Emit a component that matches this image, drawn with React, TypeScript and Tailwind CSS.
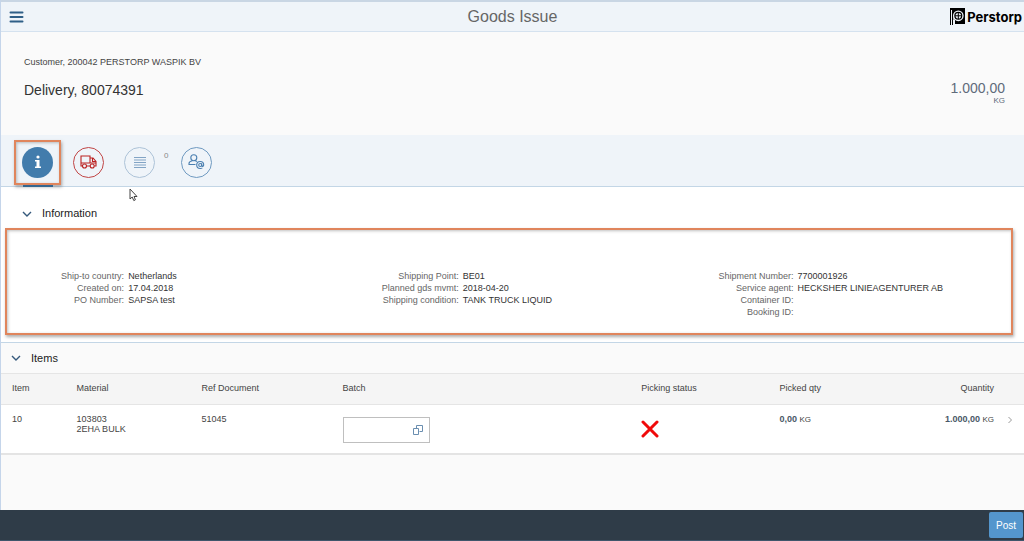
import React from "react";

type Field = { label: string; value: string };

const fieldGroups: Field[][] = [
  [
    { label: "Ship-to country:", value: "Netherlands" },
    { label: "Created on:", value: "17.04.2018" },
    { label: "PO Number:", value: "SAPSA test" },
  ],
  [
    { label: "Shipping Point:", value: "BE01" },
    { label: "Planned gds mvmt:", value: "2018-04-20" },
    { label: "Shipping condition:", value: "TANK TRUCK LIQUID" },
  ],
  [
    { label: "Shipment Number:", value: "7700001926" },
    { label: "Service agent:", value: "HECKSHER LINIEAGENTURER AB" },
    { label: "Container ID:", value: "" },
    { label: "Booking ID:", value: "" },
  ],
];

const ChevronDown = () => (
  <svg width="10" height="6" viewBox="0 0 10 6" fill="none" stroke="#35597c" strokeWidth="1.4">
    <path d="M1 1l4 4 4-4" />
  </svg>
);

const Logo = () => (
  <a href="#" aria-label="Perstorp home" className="flex items-center gap-0.5 text-black">
    <svg width="15" height="17" viewBox="0 0 15 17">
      <path d="M0 0h15v16H5V12H3V17H0z" fill="#000" />
      <path d="M1.500 2v15" stroke="#eff4f9" strokeWidth="1" />
      <path d="M4 17V7.500" stroke="#eff4f9" strokeWidth="1.400" />
      <circle cx="8.300" cy="7.800" r="4.700" fill="#000" stroke="#eff4f9" strokeWidth="1.300" />
      <circle cx="8.300" cy="7.800" r="2.800" fill="#eff4f9" />
      <path d="M8.300 4.500v6.600M5 7.800h6.600" stroke="#000" strokeWidth="1" />
    </svg>
    <span className="font-['Inter',sans-serif] text-[13px] leading-4 font-bold">Perstorp</span>
  </a>
);

const Header = () => (
  <header className="grid h-8 grid-cols-[1fr_auto_1fr] items-center border-t-2 border-b border-t-[#c9d6e4] border-b-[#d5e2ef] bg-[#eff4f9]">
    <button aria-label="Menu" className="ml-2 w-4">
      <svg width="15" height="12" viewBox="0 0 15 12" stroke="#2f5f87" strokeWidth="2" strokeLinecap="round">
        <path d="M1.500 1.500h12M1.500 6h12M1.500 10.500h12" />
      </svg>
    </button>
    <h1 className="text-base text-[#666]">Goods Issue</h1>
    <div className="flex justify-end pr-0.5">
      <Logo />
    </div>
  </header>
);

const Summary = () => (
  <section className="flex h-[103px] justify-between bg-[#fafafa] pr-[19px] pl-[23px]">
    <div>
      <p className="mt-6 text-[9px] leading-3 text-[#444]">Customer, 200042 PERSTORP WASPIK BV</p>
      <h2 className="mt-3 text-sm text-[#333]">Delivery, 80074391</h2>
    </div>
    <div className="mt-[46px] text-right text-[#5f6b7a]">
      <p className="text-sm">1.000,00</p>
      <p className="text-[8px] leading-[6px]">KG</p>
    </div>
  </section>
);

const Tabs = () => (
  <nav className="relative flex h-[52px] items-center border-b border-[#c3d6e6] bg-[#eff4f9] pt-[3px] pl-[13px]">
    <div className="mr-3 flex h-[45px] w-[47px] items-center justify-center border-2 border-[#e0855c] shadow-[1px_2px_3px_#6668,inset_1px_1px_3px_#8888]">
      <button aria-label="Information" className="flex size-[31px] items-center justify-center rounded-full bg-[#427cac]">
        <svg width="8" height="14" viewBox="0 0 8 14" fill="#fff">
          <circle cx="4" cy="2" r="1.600" />
          <path d="M1 5h4.500v6.500H7V13H1v-1.500h1.500v-5H1z" />
        </svg>
      </button>
    </div>
    <button aria-label="Shipment" className="mr-5 flex size-[31px] items-center justify-center rounded-full border border-[#c14646]">
      <svg width="17" height="14" viewBox="0 0 17 14" fill="none" stroke="#bb2020" strokeWidth="1.100">
        <path d="M2.500 11H1V1H10V8M6.500 11H10M10 3H13L16 6.500V11H14.500M1 8H16M12.500 3V6.500H16" />
        <circle cx="4.500" cy="11" r="2" />
        <circle cx="12.200" cy="11" r="2" />
      </svg>
    </button>
    <button aria-label="Notes" className="flex size-[31px] items-center justify-center rounded-full border border-[#adc3d8]">
      <svg width="12" height="13" viewBox="0 0 12 13" stroke="#82a4c5" strokeWidth="1">
        <path d="M0 1.500h12M0 4h12M0 6.500h12M0 9h12M0 11.500h12" />
      </svg>
    </button>
    <span className="mr-[13px] mb-3 ml-[9px] text-[8px] leading-3 text-[#888]">0</span>
    <button aria-label="Contact" className="flex size-[31px] items-center justify-center rounded-full border border-[#6f9ac1]">
      <svg width="17" height="16" viewBox="0 0 17 16" fill="none" stroke="#4a7fb0" strokeWidth="1.100">
        <circle cx="5.800" cy="3.800" r="3" />
        <path d="M7.500 10.500H1V9.500C1 8 2.500 7 4.500 6.700M7 6.700C8 6.900 8.700 7.200 9 7.600" />
        <circle cx="12.200" cy="11" r="1.500" />
        <path d="M13.700 9.300v2.500c0 1 2 .8 2-.9 0-2-1.400-3.400-3.500-3.400S8.700 9 8.700 11s1.500 3.500 3.500 3.500c.9 0 1.600-.2 2.200-.6" />
      </svg>
    </button>
    <span className="absolute bottom-[-1px] left-[22px] h-0.5 w-[30px] bg-[#35668f]" />
    {/* Mouse pointer */}
    <svg className="absolute top-[53px] left-32" width="9" height="14" viewBox="0 0 9 14" fill="#fff" stroke="#444" strokeWidth="1">
      <path d="M1 1v10l2.200-2 1.600 3.600 1.600-.8L5 8.500h3z" />
    </svg>
  </nav>
);

const Information = () => (
  <section>
    <h3 className="flex h-[41px] items-center gap-[10px] pt-3 pl-[21px] text-[11px] text-[#222]">
      <button aria-label="Collapse information">
        <ChevronDown />
      </button>
      Information
    </h3>
    <div className="mr-[11px] ml-1 grid h-[107px] grid-cols-3 border-2 border-[#e0855c] pt-10 shadow-[1px_2px_3px_#6668,inset_1px_1px_3px_#8888]">
      {fieldGroups.map((group, i) => (
        <dl key={i} className="text-[9px] leading-3">
          {group.map((field) => (
            <div key={field.label} className="grid grid-cols-[35%_1fr] gap-1">
              <dt className="text-right text-[#666]">{field.label}</dt>
              <dd className="text-[#333]">{field.value}</dd>
            </div>
          ))}
        </dl>
      ))}
    </div>
  </section>
);

const Items = () => (
  <section className="mt-[7px] border-t border-[#c3d6e6]">
    <h3 className="flex h-[30px] items-center gap-[10px] bg-[#fafafa] pl-[10px] text-[11px] text-[#222]">
      <button aria-label="Collapse items">
        <ChevronDown />
      </button>
      Items
    </h3>
    <table className="w-full table-fixed border-b-2 border-[#e4e4e4] text-left text-[9px] leading-[10px] text-[#444]">
      <colgroup>
        <col className="w-[7%]" />
        <col className="w-[12.2%]" />
        <col className="w-[13.8%]" />
        <col className="w-[29.2%]" />
        <col className="w-[13.5%]" />
        <col className="w-[10%]" />
        <col />
        <col className="w-[26px]" />
      </colgroup>
      <thead>
        <tr className="h-[31px] border-y border-[#e5e5e5] bg-[#f5f5f5] [&>th]:px-1 [&>th]:pb-0.5 [&>th]:font-normal">
          <th className="pl-[11px]!">Item</th>
          <th>Material</th>
          <th>Ref Document</th>
          <th>Batch</th>
          <th>Picking status</th>
          <th>Picked qty</th>
          <th className="text-right">Quantity</th>
          <th></th>
        </tr>
      </thead>
      <tbody>
        <tr className="h-[49px] bg-white align-top [&>td]:px-1 [&>td]:pt-[9px]">
          <td className="pl-[11px]!">10</td>
          <td>
            103803
            <br />
            2EHA BULK
          </td>
          <td>51045</td>
          <td className="pt-3!">
            <div className="flex h-[26px] w-[87px] items-center border border-[#bfbfbf] bg-white pr-1.5">
              <input aria-label="Batch" className="h-full w-full min-w-0 px-1 outline-none" />
              <button aria-label="Choose batch">
                <svg width="10" height="10" viewBox="0 0 10 10" fill="none" stroke="#6a8eb0" strokeWidth="1">
                  <path d="M3.500 3.500V.500h6v6h-3" />
                  <path d="M.500 3.500h5v6h-5z" />
                </svg>
              </button>
            </div>
          </td>
          <td className="pt-[15px]!">
            <svg role="img" aria-label="Not picked" width="18" height="18" viewBox="0 0 18 18" stroke="#f00a0a" strokeWidth="3" strokeLinecap="round">
              <path d="M2 2l14 14M16 2L2 16" />
            </svg>
          </td>
          <td>
            <b className="text-[#4a5866]">0,00</b> <span className="text-[8px]">KG</span>
          </td>
          <td className="text-right">
            <b className="text-[#4a5866]">1.000,00</b> <span className="text-[8px]">KG</span>
          </td>
          <td>
            <button aria-label="Open item" className="ml-1.5 block pt-0.5">
              <svg width="5" height="8" viewBox="0 0 5 8" fill="none" stroke="#999" strokeWidth="1">
                <path d="M.500 1l3 3-3 3" />
              </svg>
            </button>
          </td>
        </tr>
      </tbody>
    </table>
  </section>
);

const App = () => {
  return (
    <div className="flex min-h-screen flex-col bg-[#fafafa] font-['Liberation_Sans',Arial,sans-serif]">
      <main className="flex-1 border-l border-[#c5d5ea]">
        <Header />
        <Summary />
        <Tabs />
        <div className="bg-white">
          <Information />
          <Items />
        </div>
      </main>
      <footer className="flex h-[31px] items-center justify-end border-b border-[#3f566b] bg-[#2f3c48] pr-px">
        <button className="h-[26px] w-[34px] rounded-xs bg-[#5496cd] text-[10px] text-white">Post</button>
      </footer>
    </div>
  );
};

export default App;
